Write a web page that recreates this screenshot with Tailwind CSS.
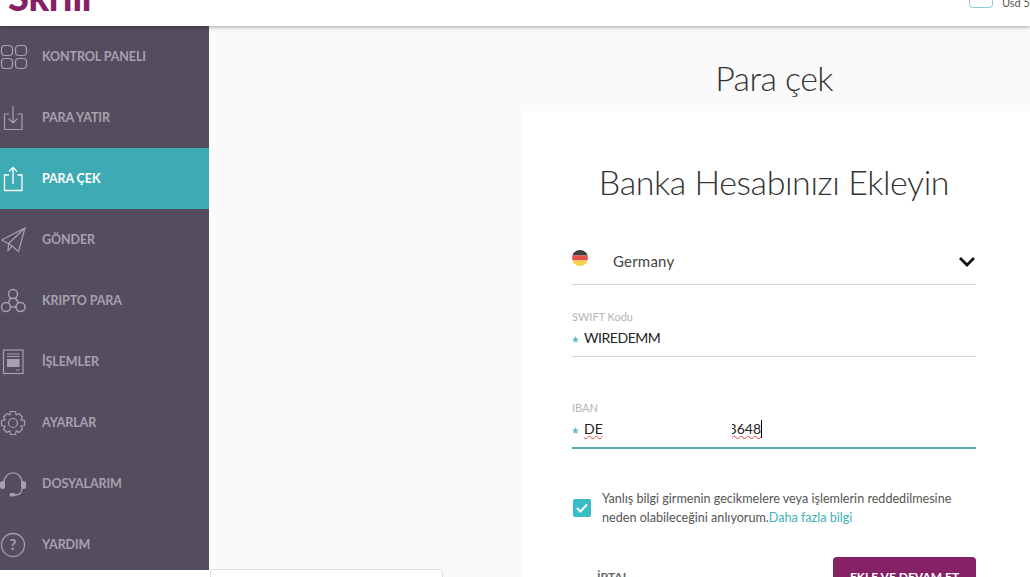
<!doctype html>
<html><head><meta charset="utf-8"><script src="https://cdn.jsdelivr.net/npm/@tailwindcss/browser@4"></script></head>
<body class="w-[1030px] h-[577px] overflow-hidden bg-[#fafafa] font-['Lato','Noto_Sans',sans-serif] relative">
<header class="h-[26px] bg-white shadow-[0_1px_4px_rgba(0,0,0,0.35)] relative z-10 flex justify-between overflow-hidden">
  <div class="ml-[8px] -mt-[23px] text-[38px] leading-[38px] font-black text-[#862165] tracking-[-0.3px]">Skrill</div>
  <div class="flex items-start">
    <div class="w-[24px] h-[9px] -mt-px border border-t-0 border-[#8fcdd3] rounded-b-[4px] mr-[9px]"></div>
    <div class="text-[11px] leading-[11px] -mt-[3px] text-[#555] w-[28px] whitespace-nowrap">Usd 5</div>
  </div>
</header>
<div class="flex h-[551px]">
  <nav class="w-[209px] h-[544px] overflow-hidden bg-[#544d60] flex flex-col text-[12.5px] font-bold text-[#a6a1ac] shrink-0 tracking-[-0.1px]">
    <a class="h-[61px] shrink-0 flex items-center gap-[12px]">
      <svg class="w-[30px] h-[26px] ml-0 shrink-0" viewBox="0 0 30 26" fill="none" stroke="#a6a1ac" stroke-width="1.2"><rect x="1.5" y="1.5" width="11" height="10" rx="3.5"/><rect x="15.5" y="1.5" width="11" height="10" rx="3.5"/><rect x="1.5" y="14.5" width="11" height="10" rx="3.5"/><rect x="15.5" y="14.5" width="11" height="10" rx="3.5"/></svg>
      <span class="pt-[2px]">KONTROL PANELI</span></a>
    <a class="h-[61px] shrink-0 flex items-center gap-[12px]">
      <svg class="w-[30px] h-[26px] shrink-0" viewBox="0 0 30 26" fill="none" stroke="#a6a1ac" stroke-width="1.2"><path d="M9 9H4.5V24.5H22V9H17.500M13 1V18M8.500 13.500L13 18L17.500 13.500"/></svg>
      <span class="pt-[2px]">PARA YATIR</span></a>
    <a class="h-[61px] shrink-0 flex items-center gap-[12px] bg-[#3eaab4] text-white">
      <svg class="w-[30px] h-[26px] shrink-0" viewBox="0 0 30 26" fill="none" stroke="#fff" stroke-width="1.300"><path d="M9 9H4.500V24.500H22V9H17.500M13 18V1.500M9 5.500L13 1.500L17 5.500"/></svg>
      <span class="pt-[2px]">PARA ÇEK</span></a>
    <a class="h-[61px] shrink-0 flex items-center gap-[12px]">
      <svg class="w-[30px] h-[26px] shrink-0" viewBox="0 0 30 26" fill="none" stroke="#a6a1ac" stroke-width="1.200"><path d="M1.500 13L25 1L18.500 24.500L12 19L8 23.500L8.500 16.500L25 1M1.500 13L8.500 16.500M12 19L8.500 16.500"/></svg>
      <span class="pt-[2px]">GÖNDER</span></a>
    <a class="h-[61px] shrink-0 flex items-center gap-[12px]">
      <svg class="w-[30px] h-[26px] shrink-0" viewBox="0 0 30 26" fill="none" stroke="#a6a1ac" stroke-width="1.500"><circle cx="13" cy="6" r="4.500"/><circle cx="6" cy="19" r="4.500"/><circle cx="20.500" cy="19" r="4.500"/><path d="M10.500 10L8 15M15.500 10L18.500 15M10.500 19H16"/></svg>
      <span class="pt-[2px]">KRIPTO PARA</span></a>
    <a class="h-[61px] shrink-0 flex items-center gap-[12px]">
      <svg class="w-[30px] h-[26px] shrink-0" viewBox="0 0 30 26" fill="none" stroke="#a6a1ac" stroke-width="1.200"><rect x="3.500" y="1" width="19.500" height="23.500"/><path d="M7 5H19.500M7 7.500H19.500M16 21H19.500" /><rect x="7" y="10" width="12.500" height="8" fill="#a6a1ac" stroke="none"/></svg>
      <span class="pt-[2px]">İŞLEMLER</span></a>
    <a class="h-[61px] shrink-0 flex items-center gap-[12px]">
      <svg class="w-[30px] h-[26px] shrink-0" viewBox="0 0 30 26" fill="none" stroke="#a6a1ac" stroke-width="1.200"><circle cx="13" cy="13" r="4.500"/><path d="M10.500 1.500H15.500L16.200 5L19 3.500L22.500 7L20.800 9.800L24.500 10.500V15.500L20.800 16.200L22.500 19L19 22.500L16.200 20.800L15.500 24.500H10.500L9.800 20.800L7 22.500L3.500 19L5.200 16.200L1.500 15.500V10.500L5.200 9.800L3.500 7L7 3.500L9.800 5Z" stroke-linejoin="round"/></svg>
      <span class="pt-[2px]">AYARLAR</span></a>
    <a class="h-[61px] shrink-0 flex items-center gap-[12px]">
      <svg class="w-[30px] h-[26px] shrink-0" viewBox="0 0 30 26" fill="none" stroke="#a6a1ac" stroke-width="1.300"><path d="M4 12C4 -1.500 22 -1.500 22 12M22 17C22 22 20 24 15 24"/><rect x="0" y="10" width="5" height="8" rx="2.500" fill="#a6a1ac" stroke="none"/><rect x="21" y="10" width="5" height="8" rx="2.500" fill="#a6a1ac" stroke="none"/><rect x="9.500" y="22" width="6" height="3.500" rx="1.700" fill="#a6a1ac" stroke="none"/></svg>
      <span class="pt-[2px]">DOSYALARIM</span></a>
    <a class="h-[61px] shrink-0 flex items-center gap-[12px]">
      <svg class="w-[30px] h-[26px] shrink-0" viewBox="0 0 30 26" fill="none" stroke="#a6a1ac" stroke-width="1.300"><circle cx="13" cy="13" r="11.500"/><text x="13" y="18" text-anchor="middle" font-size="15" font-weight="700" fill="#a6a1ac" stroke="none" font-family="Lato">?</text></svg>
      <span class="pt-[2px]">YARDIM</span></a>
  </nav>
  <main class="flex-1 flex flex-col">
    <h1 class="text-[34px] leading-[42px] font-light text-[#333] text-center ml-[312px] mr-[3px] mt-[31px] tracking-[-0.6px]">Para çek</h1>
    <section class="ml-[312px] mt-[12px] bg-white w-[509px] h-[470px] pl-[51px] pr-[54px]">
      <h2 class="text-[34px] leading-[42px] font-light text-[#333] text-center mt-[50px] tracking-[-0.42px]">Banka Hesabınızı Ekleyin</h2>
      <div class="mt-[30px] h-[52px] border-b border-[#d5d5d5] flex items-center pt-[5px]">
        <svg class="w-[16px] h-[16px] mr-[25px] -mt-[6px]" viewBox="0 0 16 16"><defs><clipPath id="c"><circle cx="8" cy="8" r="8"/></clipPath></defs><g clip-path="url(#c)"><rect width="16" height="5.500" fill="#3f3f3f"/><rect y="5.500" width="16" height="5" fill="#e4524a"/><rect y="10.500" width="16" height="5.500" fill="#f5d24b"/></g></svg>
        <span class="text-[15px] text-[#444] tracking-[0.2px]">Germany</span>
        <svg class="ml-auto mr-[1px] mt-[2px] w-[16px] h-[10px]" viewBox="0 0 16 10" fill="none" stroke="#111" stroke-width="2.800"><path d="M1 1L8 8L15 1"/></svg>
      </div>
      <div class="mt-[26px] h-[46px] border-b border-[#d5d5d5]">
        <div class="text-[11px] leading-[11px] text-[#b5b5b5]">SWIFT Kodu</div>
        <div class="flex items-center mt-[6px] text-[14px] leading-[20px] text-[#222] tracking-[-0.45px]"><span class="w-[12px] flex"><svg class="w-[7px] h-[7px] mt-[2px]" viewBox="0 0 10 10" fill="#5fbcc4"><path d="M5 0L6.400 3.400L10 3.700L7.200 6L8.100 9.600L5 7.700L1.900 9.600L2.800 6L0 3.700L3.600 3.400Z"/></svg></span>WIREDEMM</div>
      </div>
      <div class="mt-[45px] h-[47px] border-b-2 border-[#5aaab2]">
        <div class="text-[11px] leading-[11px] text-[#b5b5b5]">IBAN</div>
        <div class="flex items-center mt-[6px] text-[14px] leading-[20px] text-[#222] relative"><span class="w-[12px] flex"><svg class="w-[7px] h-[7px] mt-[2px]" viewBox="0 0 10 10" fill="#5fbcc4"><path d="M5 0L6.400 3.400L10 3.700L7.200 6L8.100 9.600L5 7.700L1.900 9.600L2.800 6L0 3.700L3.600 3.400Z"/></svg></span><span class="underline decoration-wavy decoration-[#e0443e] decoration-1 w-[148px]">DE</span><span class="flex justify-end w-[29px] overflow-hidden underline decoration-wavy decoration-[#e0443e] decoration-1">3648</span><span class="w-px h-[18px] bg-black"></span></div>
      </div>
      <div class="mt-[40px] flex items-center gap-[11px]">
        <span class="ml-px w-[18px] h-[18px] rounded-[2px] bg-[#38bdc8] flex items-center justify-center shrink-0"><svg class="w-[12px] h-[10px]" viewBox="0 0 12 10" fill="none" stroke="#fff" stroke-width="2"><path d="M1 5L4.500 8.500L11 1.500"/></svg></span>
        <p class="text-[12.6px] leading-[19px] text-[#555]">Yanlış bilgi girmenin gecikmelere veya işlemlerin reddedilmesine<br>neden olabileceğini anlıyorum.<span class="text-[#3eb1ba]">Daha fazla bilgi</span></p>
      </div>
      <div class="mt-[30px] flex justify-between items-start">
        <span class="ml-[25px] mt-[11px] text-[12px] font-bold text-[#666]">İPTAL</span>
        <span class="w-[143px] h-[40px] rounded-[4px] bg-[#862165] text-white text-[12px] font-bold text-center pt-[11px]">EKLE VE DEVAM ET</span>
      </div>
    </section>
  </main>
</div>
<div class="absolute left-[210px] top-[569px] w-[233px] h-[20px] bg-white border border-[#ddd] rounded-[4px]"></div>
<div class="absolute left-0 top-[570px] w-[210px] h-[7px] bg-white overflow-hidden text-[11px] leading-[12px] pl-[15px] pt-[6px] text-[#444] whitespace-nowrap">hl dl hd lkb lh dl bk hl d kh</div>
</body></html>
